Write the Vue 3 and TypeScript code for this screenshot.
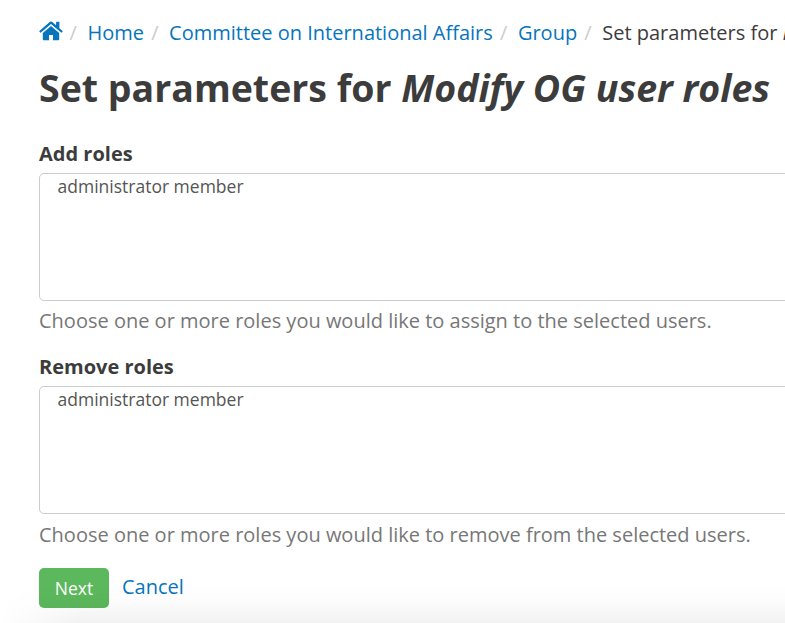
<script setup lang="ts">
interface Crumb { label: string }
interface RoleField { id: string; label: string; help: string; options: string }

const crumbs: Crumb[] = [
  { label: 'Home' },
  { label: 'Committee on International Affairs' },
  { label: 'Group' },
]
const fields: RoleField[] = [
  { id: 'add', label: 'Add roles', help: 'Choose one or more roles you would like to assign to the selected users.', options: 'administrator member' },
  { id: 'remove', label: 'Remove roles', help: 'Choose one or more roles you would like to remove from the selected users.', options: 'administrator member' },
]
</script>

<template>
  <main class="page">
    <nav class="breadcrumb">
      <a class="home" aria-label="Home">
        <svg viewBox="0 0 24 20" width="24" height="20">
          <path d="M12 5.1 3.8 11.9V18.4Q3.8 19.2 4.6 19.2H10V14H14V19.2H19.4Q20.2 19.2 20.2 18.4V11.9Z" />
          <path d="M23.6 10 20.4 7.3V1.2Q20.4.8 20 .8H17.5Q17.1.8 17.1 1.2V4.2L13.3 1Q12 0 10.7 1L.4 10Q.1 10.3.4 10.6L1.2 11.5Q1.5 11.8 1.9 11.5L12 3.1 22.1 11.5Q22.5 11.8 22.8 11.5L23.6 10.6Q23.9 10.3 23.6 10Z" />
        </svg>
      </a>
      <template v-for="crumb in crumbs" :key="crumb.label">
        <span class="sep">/</span><a>{{ crumb.label }}</a>
      </template>
      <span class="sep">/</span><span>Set parameters for <em>Modify OG user roles</em></span>
    </nav>
    <h1>Set parameters for <em>Modify OG user roles</em></h1>
    <section v-for="field in fields" :key="field.id" class="field">
      <label>{{ field.label }}</label>
      <div class="listbox">{{ field.options }}</div>
      <p>{{ field.help }}</p>
    </section>
    <div class="actions">
      <button type="button">Next</button>
      <a>Cancel</a>
    </div>
    <div class="fade"></div>
  </main>
</template>

<style>
body { overflow: hidden; }
</style>
<style scoped>
.page {
  position: relative;
  box-sizing: border-box;
  height: 623px;
  padding: 19px 0 0 39px;
  overflow: hidden;
  display: flex;
  flex-direction: column;
  background: #fff;
  color: #3c3c3c;
  font: 20px/28px "Open Sans", sans-serif;
}
a { color: #0675bd; text-decoration: none; }
.breadcrumb { display: flex; flex: none; height: 28px; white-space: nowrap; }
.breadcrumb > * { flex: none; }
.home { width: 23.4px; padding-top: 1.5px; }
.home svg { display: block; fill: currentColor; }
.sep { box-sizing: border-box; width: 25.1px; padding-left: 7.2px; color: #ccc; }
h1 { flex: none; margin: 14px 0 1px; height: 54px; font-size: 37.5px; line-height: 54px; font-weight: 700; white-space: nowrap; }
.field { flex: none; height: 213px; padding-top: 24px; box-sizing: border-box; }
.field + .field { height: 214px; }
.field label { display: block; height: 33px; font-weight: 700; line-height: 28px; }
.listbox {
  box-sizing: border-box;
  width: 800px;
  height: 128px;
  padding-left: 17.5px;
  border: 1px solid #ccc;
  border-radius: 5px;
  color: #555;
  font-size: 17.5px;
  line-height: 25px;
}
.field p { margin: 6px 0 0; color: #777; white-space: nowrap; }
.field + .field p { margin-top: 7px; }
.actions { display: flex; flex: none; gap: 13px; margin-top: 25px; }
.actions a { line-height: 38px; }
button {
  width: 70px;
  height: 40px;
  padding: 0;
  border: 0;
  border-radius: 5px;
  background: #5cb85c;
  color: #fff;
  font: 17.5px/40px "Open Sans", sans-serif;
}
.fade {
  position: absolute;
  right: 0;
  bottom: 0;
  left: 0;
  height: 38px;
  background: linear-gradient(transparent, rgba(0, 0, 0, .012) 40%, rgba(0, 0, 0, .05));
  -webkit-mask-image: linear-gradient(90deg, transparent, #000 80px);
  mask-image: linear-gradient(90deg, transparent, #000 80px);
  pointer-events: none;
}
</style>
